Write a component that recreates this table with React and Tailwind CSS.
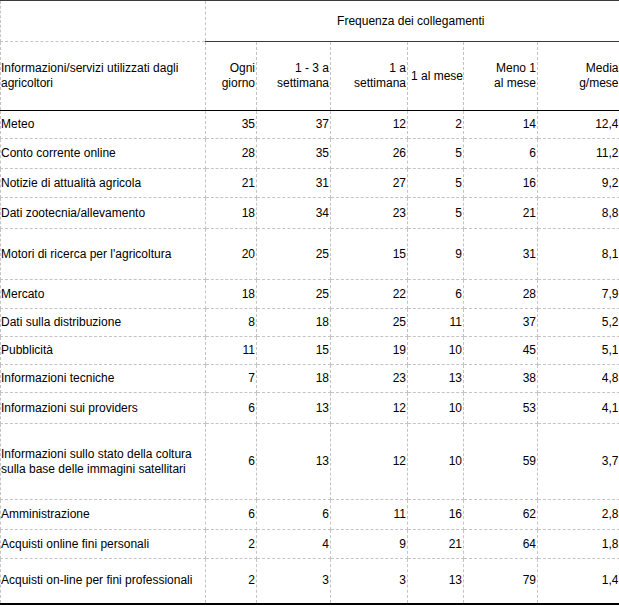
import React from "react";

const rows = [
  { label: "Meteo", h: "h-[28px]", v: ["35", "37", "12", "2", "14", "12,4"] },
  { label: "Conto corrente online", h: "h-[30px]", v: ["28", "35", "26", "5", "6", "11,2"] },
  { label: "Notizie di attualità agricola", h: "h-[29px]", v: ["21", "31", "27", "5", "16", "9,2"] },
  { label: "Dati zootecnia/allevamento", h: "h-[31px]", v: ["18", "34", "23", "5", "21", "8,8"] },
  { label: "Motori di ricerca per l'agricoltura", h: "h-[51px]", v: ["20", "25", "15", "9", "31", "8,1"] },
  { label: "Mercato", h: "h-[29px]", v: ["18", "25", "22", "6", "28", "7,9"] },
  { label: "Dati sulla distribuzione", h: "h-[28px]", v: ["8", "18", "25", "11", "37", "5,2"] },
  { label: "Pubblicità", h: "h-[28px]", v: ["11", "15", "19", "10", "45", "5,1"] },
  { label: "Informazioni tecniche", h: "h-[28px]", v: ["7", "18", "23", "13", "38", "4,8"] },
  { label: "Informazioni sui providers", h: "h-[31px]", v: ["6", "13", "12", "10", "53", "4,1"] },
  {
    label: "Informazioni sullo stato della coltura sulla base delle immagini satellitari",
    h: "h-[76px]",
    v: ["6", "13", "12", "10", "59", "3,7"],
  },
  { label: "Amministrazione", h: "h-[30px]", v: ["6", "6", "11", "16", "62", "2,8"] },
  { label: "Acquisti online fini personali", h: "h-[29px]", v: ["2", "4", "9", "21", "64", "1,8"] },
  { label: "Acquisti on-line per fini professionali", h: "h-[45px]", v: ["2", "3", "3", "13", "79", "1,4"] },
];

const heads = [
  ["Ogni", "giorno"],
  ["1 - 3 a", "settimana"],
  ["1 a", "settimana"],
  ["1 al mese"],
  ["Meno 1", "al mese"],
  ["Media", "g/mese"],
];

const dash = "border border-dashed border-[#c4c4c4]";

export default function App() {
  return (
    <div className="w-[619px] h-[607px] bg-white overflow-hidden font-['Liberation_Sans',Arial,sans-serif] text-[12px] leading-[15px] text-black">
      <table className="table-fixed border-collapse w-[619px]">
        <colgroup>
          <col className="w-[205px]" />
          <col className="w-[51px]" />
          <col className="w-[74px]" />
          <col className="w-[77px]" />
          <col className="w-[56px]" />
          <col className="w-[74px]" />
          <col className="w-[82px]" />
        </colgroup>
        <thead>
          <tr className="h-[41px] border-t border-t-[#3a3a3a]">
            <th className={`${dash} border-t-0`}></th>
            <th
              colSpan={6}
              className="border-b border-b-[#3a3a3a] border-r-0 font-normal text-center pr-[4px]"
            >
              Frequenza dei collegamenti
            </th>
          </tr>
          <tr className="h-[69px]">
            <th className={`${dash} border-b-0 font-normal text-left pl-0`}>
              Informazioni/servizi utilizzati dagli
              <br />
              agricoltori
            </th>
            {heads.map((hd, i) => (
              <th
                key={i}
                className={`${dash} border-t-0 border-b-0 ${i === 5 ? "border-r-0" : ""} font-normal text-right pr-[1px] pl-[3px] overflow-hidden whitespace-nowrap`}
              >
                {hd.map((l, j) => (
                  <div key={j}>{l}</div>
                ))}
              </th>
            ))}
          </tr>
        </thead>
        <tbody className="border-t border-t-black border-b-2 border-b-black">
          {rows.map((r, i) => (
            <tr key={i} className={r.h}>
              <td className={`${dash} ${i === 0 ? "border-t-0" : ""} ${i === rows.length - 1 ? "border-b-0" : ""} pl-0 pr-2`}>
                {r.label}
              </td>
              {r.v.map((n, k) => (
                <td
                  key={k}
                  className={`${dash} ${i === 0 ? "border-t-0" : ""} ${i === rows.length - 1 ? "border-b-0" : ""} ${k === 5 ? "border-r-0" : ""} text-right pr-[1px] overflow-hidden whitespace-nowrap`}
                >
                  {n}
                </td>
              ))}
            </tr>
          ))}
        </tbody>
      </table>
    </div>
  );
}
